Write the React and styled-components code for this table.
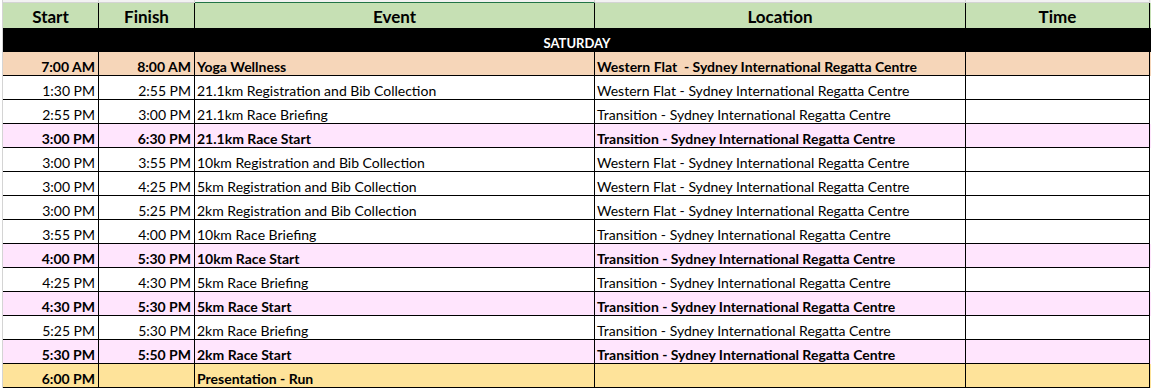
import React from "react"
import styled, { createGlobalStyle } from "styled-components"

const GlobalStyle = createGlobalStyle`
    body {
        margin: 0;
        background: #ffffff;
        font-family: Lato, "Open Sans", "Liberation Sans", sans-serif;
        color: #000000;
    }
`

const COLS = "96px 96px 400px 371px 184px"

const tones = {
    plain: "#ffffff",
    peach: "#f6d6b9",
    pink: "#ffe5fd",
    gold: "#fee39a",
}

const Sheet = styled.div`
    width: 1153px;
    height: 391px;
    padding-left: 2px;
    box-sizing: border-box;
    overflow: hidden;
`

const Table = styled.div`
    border-left: 1px solid #d4d4d4;
    width: 1148px;
`

const Gutter = styled.div`
    display: grid;
    grid-template-columns: ${COLS};
    height: 3px;
    background: #f2f2f2;
`

const GutterCell = styled.div`
    border-right: 1px solid #d4d4d4;
    border-bottom: 1px solid ${props => props.$active ? "#217346" : "#d4d4d4"};
`

const HeadRow = styled.div`
    display: grid;
    grid-template-columns: ${COLS};
    height: 25px;
    background: #c6e0b4;
`

const HeadCell = styled.div`
    border-right: 1px solid #000000;
    display: flex;
    align-items: flex-end;
    justify-content: center;
    padding-bottom: 1px;
    font-size: 17px;
    font-weight: 700;
    line-height: 20px;
`

const DayBand = styled.div`
    height: 24px;
    background: #000000;
    border-bottom: 1px solid #000000;
    color: #ffffff;
    font-size: 13px;
    font-weight: 700;
    display: flex;
    align-items: center;
    justify-content: center;
    padding-top: 6px;
    box-sizing: border-box;
`

const Row = styled.div`
    display: grid;
    grid-template-columns: ${COLS};
    height: 24px;
    background: ${props => tones[props.$tone]};
    font-weight: ${props => props.$tone === "plain" ? 400 : 700};
`

const Cell = styled.div`
    border-right: 1px solid #000000;
    border-bottom: 1px solid #000000;
    display: flex;
    align-items: flex-end;
    justify-content: ${props => props.$align === "right" ? "flex-end" : "flex-start"};
    padding: 0 3px 0 2px;
    font-size: 14px;
    line-height: 17px;
    white-space: pre;
    overflow: hidden;
`

const WF = "Western Flat - Sydney International Regatta Centre"
const TR = "Transition - Sydney International Regatta Centre"

const rows = [
    { start: "7:00 AM", finish: "8:00 AM", event: "Yoga Wellness", location: "Western Flat  - Sydney International Regatta Centre", tone: "peach" },
    { start: "1:30 PM", finish: "2:55 PM", event: "21.1km Registration and Bib Collection", location: WF, tone: "plain" },
    { start: "2:55 PM", finish: "3:00 PM", event: "21.1km Race Briefing", location: TR, tone: "plain" },
    { start: "3:00 PM", finish: "6:30 PM", event: "21.1km Race Start", location: TR, tone: "pink" },
    { start: "3:00 PM", finish: "3:55 PM", event: "10km Registration and Bib Collection", location: WF, tone: "plain" },
    { start: "3:00 PM", finish: "4:25 PM", event: "5km Registration and Bib Collection", location: WF, tone: "plain" },
    { start: "3:00 PM", finish: "5:25 PM", event: "2km Registration and Bib Collection", location: WF, tone: "plain" },
    { start: "3:55 PM", finish: "4:00 PM", event: "10km Race Briefing", location: TR, tone: "plain" },
    { start: "4:00 PM", finish: "5:30 PM", event: "10km Race Start", location: TR, tone: "pink" },
    { start: "4:25 PM", finish: "4:30 PM", event: "5km Race Briefing", location: TR, tone: "plain" },
    { start: "4:30 PM", finish: "5:30 PM", event: "5km Race Start", location: TR, tone: "pink" },
    { start: "5:25 PM", finish: "5:30 PM", event: "2km Race Briefing", location: TR, tone: "plain" },
    { start: "5:30 PM", finish: "5:50 PM", event: "2km Race Start", location: TR, tone: "pink" },
    { start: "6:00 PM", finish: "", event: "Presentation - Run", location: "", tone: "gold" },
]

const headers = ["Start", "Finish", "Event", "Location", "Time"]

export default function App() {
    return (
        <Sheet>
            <GlobalStyle />
            <Table>
                <Gutter>
                    {headers.map(h => <GutterCell key={h} $active={h === "Event"} />)}
                </Gutter>
                <HeadRow>
                    {headers.map(h => <HeadCell key={h}>{h}</HeadCell>)}
                </HeadRow>
                <DayBand>SATURDAY</DayBand>
                {rows.map((r, i) => (
                    <Row key={i} $tone={r.tone}>
                        <Cell $align="right">{r.start}</Cell>
                        <Cell $align="right">{r.finish}</Cell>
                        <Cell>{r.event}</Cell>
                        <Cell>{r.location}</Cell>
                        <Cell />
                    </Row>
                ))}
            </Table>
        </Sheet>
    )
}
